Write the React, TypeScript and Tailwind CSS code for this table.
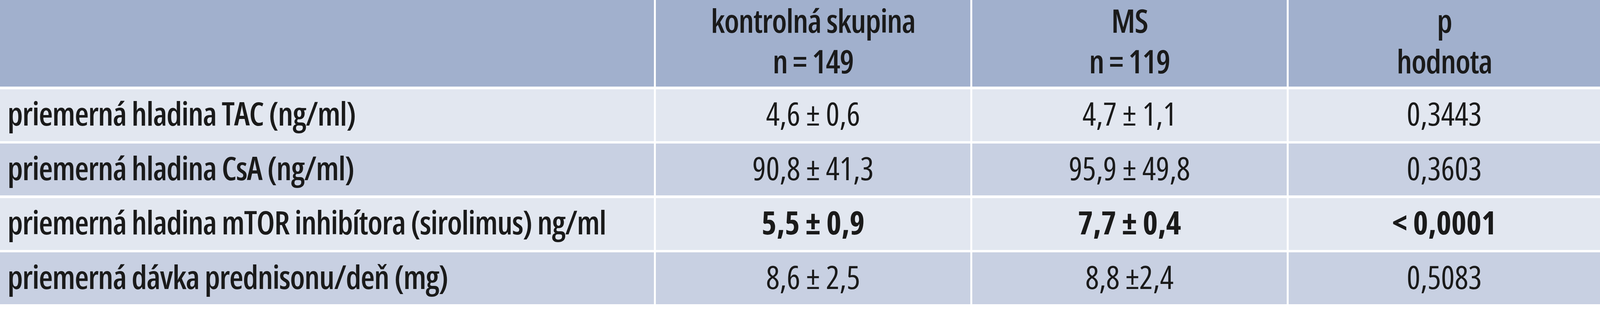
const rows = [
  { label: "priemerná hladina TAC (ng/ml)", a: "4,6 ± 0,6", b: "4,7 ± 1,1", p: "0,3443", bold: false },
  { label: "priemerná hladina CsA (ng/ml)", a: "90,8 ± 41,3", b: "95,9 ± 49,8", p: "0,3603", bold: false },
  { label: "priemerná hladina mTOR inhibítora (sirolimus) ng/ml", a: "5,5 ± 0,9", b: "7,7 ± 0,4", p: "< 0,0001", bold: true },
  { label: "priemerná dávka prednisonu/deň (mg)", a: "8,6 ± 2,5", b: "8,8 ±2,4", p: "0,5083", bold: false },
];

function HeadCell({ top, bottom }: { top: string; bottom: string }) {
  return (
    <div className="h-[222px] bg-[#a1b0cd] flex flex-col items-center text-[83px] leading-[104px] font-semibold tracking-[-0.02em] whitespace-nowrap">
      <span>{top}</span>
      <span>{bottom}</span>
    </div>
  );
}

export default function App() {
  return (
    <div
      className="w-full h-[800px] bg-white text-[#1a1a1a] font-stretch-condensed"
      style={{ fontFamily: '"Open Sans", "Noto Sans", sans-serif' }}
    >
      <div className="grid grid-cols-[1674px_805px_805px_1fr] gap-x-[5px] gap-y-[6.5px]">
        <div className="h-[222px] bg-[#a1b0cd]" />
        <HeadCell top="kontrolná skupina" bottom="n = 149" />
        <HeadCell top="MS" bottom="n = 119" />
        <HeadCell top="p" bottom="hodnota" />

        {rows.map((r, i) => {
          const bg = i % 2 === 0 ? "bg-[#e2e7f0]" : "bg-[#c8d0e2]";
          const weight = r.bold ? "font-bold" : "font-normal";
          return [
            <div
              key={`l${i}`}
              className={`h-[133px] ${bg} flex items-center pl-[19px] pb-[9px] text-[83px] font-semibold tracking-[-0.02em] whitespace-nowrap`}
            >
              {r.label}
            </div>,
            <div key={`a${i}`} className={`h-[133px] ${bg} flex items-center justify-center pb-[9px] text-[82px] whitespace-nowrap ${weight}`}>
              {r.a}
            </div>,
            <div key={`b${i}`} className={`h-[133px] ${bg} flex items-center justify-center pb-[9px] text-[82px] whitespace-nowrap ${weight}`}>
              {r.b}
            </div>,
            <div key={`p${i}`} className={`h-[133px] ${bg} flex items-center justify-center pb-[9px] text-[82px] whitespace-nowrap ${weight}`}>
              {r.p}
            </div>,
          ];
        })}
      </div>
    </div>
  );
}
